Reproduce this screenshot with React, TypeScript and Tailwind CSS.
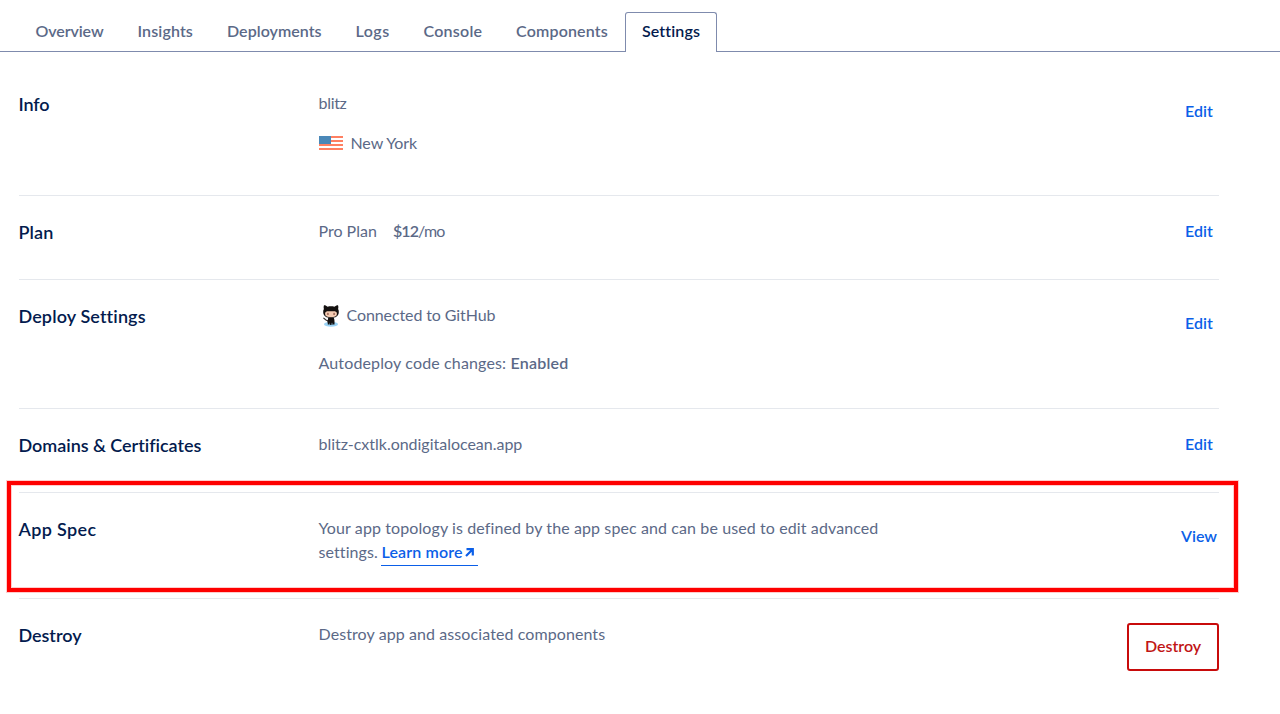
import type { ReactNode } from "react";

const tabs = [
  { label: "Overview", size: "w-[102px]", tracking: "tracking-[-0.1px]" },
  { label: "Insights", size: "w-[89.5px]", tracking: "tracking-[0.12px]" },
  { label: "Deployments", size: "w-[128.5px]", tracking: "tracking-[0.04px]" },
  { label: "Logs", size: "w-[68px]", tracking: "tracking-[0.5px]" },
  { label: "Console", size: "w-[92.5px]", tracking: "tracking-[0.25px]" },
  { label: "Components", size: "w-[125.5px]", tracking: "tracking-[0.18px]" },
];

function Flag() {
  return (
    <svg width="24" height="14" viewBox="0 0 24 14" shapeRendering="crispEdges" className="mr-2 shrink-0">
      <path fill="#fff" d="M0 0h24v14H0z" />
      <path fill="#ff8062" d="M0 0h24v2H0zM0 4h24v2H0zM0 8h24v2H0zM0 12h24v2H0z" />
      <path fill="#4a88b8" d="M0 0h12v8H0z" />
    </svg>
  );
}

function Octocat() {
  return (
    <svg width="24" height="24" viewBox="0 0 24 24" className="mr-1 shrink-0">
      <ellipse cx="12" cy="21.300" rx="7" ry="2.500" fill="#9bd3f5" />
      <path d="M9 19v-1.500C6.500 18 6.500 16 4.800 15.200" fill="none" stroke="#3a3433" strokeWidth="1.200" strokeLinecap="round" />
      <path fill="#14100f" d="M9.300 14.500h5.400c.9 2 .9 4.500.8 7h-1.500l-.3-2-.3 2.500h-.900l-.3-2.500-.4 2.500h-.9l-.3-2.500-.3 2H8.800c-.1-2.500-.1-5 .5-7z" />
      <path fill="#14100f" d="M5 2.300c1.500 0 2.700.7 3.600 1.500 2-.6 4.800-.6 6.800 0 1-.8 2.200-1.500 3.600-1.500.5 1.300.4 2.600.1 3.600.6 1 .8 2.200.7 3.400-.3 4-3 5.700-7.800 5.700s-7.500-1.700-7.800-5.700c-.1-1.200.1-2.400.7-3.400-.3-1-.4-2.300.1-3.600z" />
      <path fill="#f4cbb2" d="M8.100 8.300c1.300-.3 2.500 0 3.900 0s2.600-.3 3.900 0c1.500.3 2.200 1.500 2 2.900-.3 2.300-2.400 3-5.900 3s-5.600-.7-5.900-3c-.2-1.400.5-2.600 2-2.900z" />
      <ellipse cx="8.900" cy="10.900" rx=".9" ry="1.200" fill="#a06a5a" />
      <ellipse cx="15.100" cy="10.900" rx=".9" ry="1.200" fill="#a06a5a" />
    </svg>
  );
}

function ExternalArrow() {
  return (
    <svg width="9" height="9" viewBox="0 0 9 9" className="ml-[2px] shrink-0">
      <path d="M1.500 1.200h6.300v6.300M7.500 1.500L1 8" fill="none" stroke="#0b5fe8" strokeWidth="2.200" />
    </svg>
  );
}

type RowProps = {
  title: string;
  titleTracking: string;
  height: string;
  action: ReactNode;
  actionOffset?: string;
  highlighted?: boolean;
  children: ReactNode;
};

function Row({ title, titleTracking, height, action, actionOffset = "pt-[23px]", highlighted, children }: RowProps) {
  return (
    <section className={`relative flex ${height}`}>
      <h2 className={`-ml-[0.5px] w-[300px] shrink-0 pt-6 text-[18px] leading-6 font-semibold text-[#031b4e] ${titleTracking}`}>{title}</h2>
      <div className="grow pt-[23px]">{children}</div>
      <div className={actionOffset}>{action}</div>
      {highlighted && (
        <div className="pointer-events-none absolute -top-3 -left-3 h-[111px] w-[1231px] border-4 border-[#fe0000] shadow-[0_0_0_1px_#ffcccc,inset_0_0_0_1px_#ffcccc]" />
      )}
    </section>
  );
}

function Action({ children, tracking }: { children: string; tracking: string }) {
  return (
    <a href="#" className={`block w-10 text-center font-semibold text-[#0b5fe8] ${tracking}`}>
      {children}
    </a>
  );
}

export default function App() {
  return (
    <main className="h-[714px] w-[1280px] overflow-hidden bg-white font-['Lato',sans-serif] text-[16px] leading-6 whitespace-nowrap text-[#5b6987]">
      <nav className="flex h-[52px] items-end font-semibold">
        <div className="h-10 w-[19px] border-b border-[#7f8bad]" />
        {tabs.map((tab) => (
          <a key={tab.label} href="#" className={`h-10 border-b border-[#7f8bad] pt-[7px] pl-[16.5px] ${tab.size} ${tab.tracking}`}>
            {tab.label}
          </a>
        ))}
        <a href="#" className="h-10 w-[92px] rounded-t-[3px] border border-b-0 border-[#7f8bad] pt-[6px] text-center tracking-[0.14px] text-[#031b4e]">
          Settings
        </a>
        <div className="h-10 grow border-b border-[#7f8bad]" />
      </nav>

      <div className="mt-4 ml-[19px] w-[1200px] divide-y divide-[#e5e8ed]">
        <Row title="Info" titleTracking="tracking-[-0.1px]" height="h-32" actionOffset="pt-[31px]" action={<Action tracking="tracking-[0.1px]">Edit</Action>}>
          <p className="tracking-[-0.3px]">blitz</p>
          <p className="mt-4 flex items-center tracking-[-0.1px]">
            <Flag />
            New York
          </p>
        </Row>

        <Row title="Plan" titleTracking="tracking-[0.1px]" height="h-[84px]" action={<Action tracking="tracking-[0.1px]">Edit</Action>}>
          <p className="flex">
            <span className="w-[74.5px]">Pro Plan</span>
            <b className="font-semibold tracking-[-0.95px]">$12</b>
            <span className="tracking-[-0.8px]">/mo</span>
          </p>
        </Row>

        <Row title="Deploy Settings" titleTracking="tracking-[0.12px]" height="h-[129px]" actionOffset="pt-[31px]" action={<Action tracking="tracking-[0.1px]">Edit</Action>}>
          <p className="flex items-center tracking-[-0.1px]">
            <Octocat />
            Connected to GitHub
          </p>
          <p className="mt-6 tracking-[0.14px]">
            Autodeploy code changes: <b className="font-semibold tracking-[0.25px]">Enabled</b>
          </p>
        </Row>

        <Row title="Domains &amp; Certificates" titleTracking="tracking-[-0.03px]" height="h-[84px]" action={<Action tracking="tracking-[0.1px]">Edit</Action>}>
          <p className="tracking-[-0.02px]">blitz-cxtlk.ondigitalocean.app</p>
        </Row>

        <Row title="App Spec" titleTracking="tracking-[0.36px]" height="h-[106px]" actionOffset="pt-[31px]" highlighted action={<Action tracking="tracking-[0px]">View</Action>}>
          <p className="tracking-[0.105px]">Your app topology is defined by the app spec and can be used to edit advanced</p>
          <p className="flex">
            <span className="w-[62.5px] tracking-[0.09px]">settings.</span>
            <a href="#" className="flex h-[26px] w-[97px] items-center border-b border-[#0b5fe8] pb-px pl-[0.5px] font-semibold tracking-[0.15px] text-[#0b5fe8]">
              Learn more
              <ExternalArrow />
            </a>
          </p>
        </Row>

        <Row
          title="Destroy"
          titleTracking="tracking-[-0.04px]"
          height="h-[100px]"
          action={
            <button className="mt-px h-12 w-[92px] rounded-[3px] border-2 border-[#c80b0b] pb-[2px] font-semibold text-[#c11515]">
              Destroy
            </button>
          }
        >
          <p className="tracking-[0.09px]">Destroy app and associated components</p>
        </Row>
      </div>
    </main>
  );
}
